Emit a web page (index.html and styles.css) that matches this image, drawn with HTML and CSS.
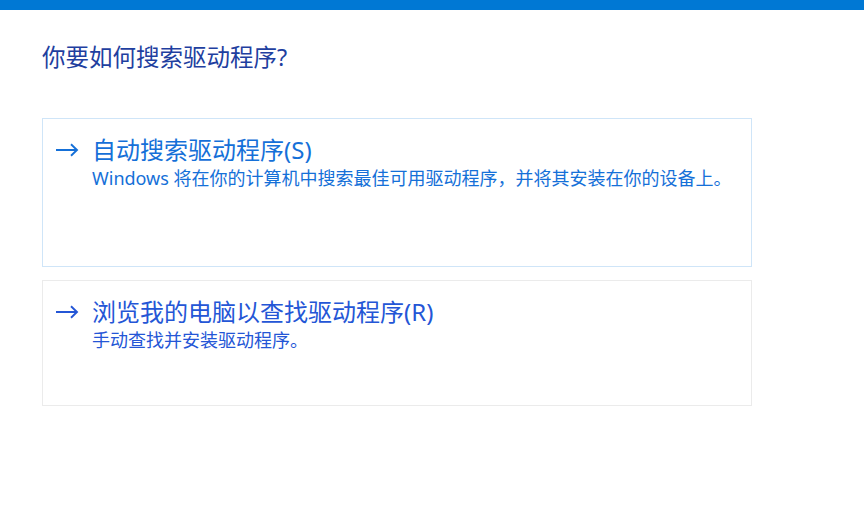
FILE: index.html
```html
<!DOCTYPE html>
<html lang="zh-CN">
<head>
<meta charset="utf-8">
<title>更新驱动程序</title>
<link rel="stylesheet" href="styles.css">
</head>
<body>
<div class="topbar"></div>
<main class="page">
  <h1 class="heading">你要如何搜索驱动程序?</h1>
  <div class="options">
    <a class="option option-auto" href="#">
      <svg class="arrow" width="24" height="14" viewBox="0 0 24 14" aria-hidden="true">
        <path d="M1 7H22M16 1.2L22 7L16 12.8" fill="none" stroke="currentColor" stroke-width="1.9"/>
      </svg>
      <div class="option-text">
        <div class="option-title">自动搜索驱动程序(S)</div>
        <div class="option-desc">Windows 将在你的计算机中搜索最佳可用驱动程序，并将其安装在你的设备上。</div>
      </div>
    </a>
    <a class="option option-browse" href="#">
      <svg class="arrow" width="24" height="14" viewBox="0 0 24 14" aria-hidden="true">
        <path d="M1 7H22M16 1.2L22 7L16 12.8" fill="none" stroke="currentColor" stroke-width="1.9"/>
      </svg>
      <div class="option-text">
        <div class="option-title">浏览我的电脑以查找驱动程序(R)</div>
        <div class="option-desc">手动查找并安装驱动程序。</div>
      </div>
    </a>
  </div>
</main>
</body>
</html>
```
FILE: styles.css
```css
html, body {
  margin: 0;
  padding: 0;
  background: #ffffff;
}

body {
  font-family: "Noto Sans", "Noto Sans CJK SC", sans-serif;
}

.topbar {
  height: 10px;
  background: #0078d4;
}

.page {
  padding: 0 112px 0 42px;
}

.heading {
  margin: 31px 0 0;
  font-size: 23.5px;
  line-height: 32px;
  font-weight: 400;
  color: #1f3f9f;
}

.options {
  margin-top: 45px;
  display: flex;
  flex-direction: column;
  gap: 13px;
}

.option {
  display: flex;
  align-items: flex-start;
  gap: 13px;
  padding: 16px 12px 0 12px;
  border: 1px solid #ebebeb;
  text-decoration: none;
  box-sizing: border-box;
}

.option-auto {
  height: 149px;
  border-color: #cfe5f8;
  color: #1570d8;
}

.option-browse {
  height: 126px;
  color: #2456d6;
}

.arrow {
  flex: none;
  margin-top: 8px;
}

.option-title {
  font-size: 24px;
  line-height: 30px;
}

.option-desc {
  font-size: 18px;
  line-height: 26px;
}
```
